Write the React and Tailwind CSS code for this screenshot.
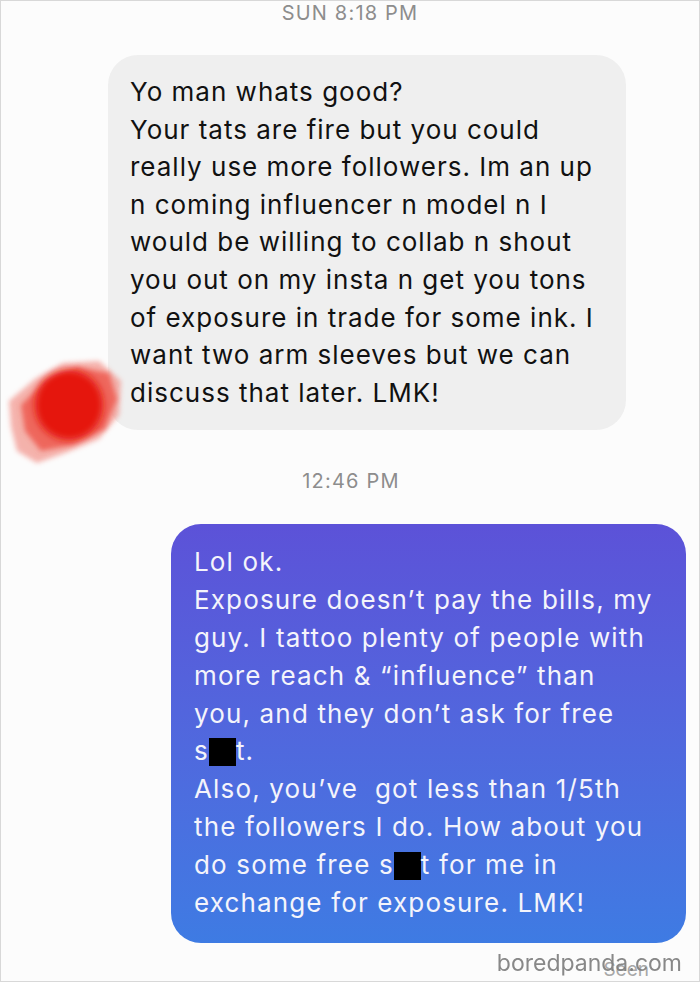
import React from "react";

const Redact = () => <span className="inline-block w-[27px] h-[28px] bg-black align-[-6px]" />;

const Blob = () => (
  <svg width="124" height="118" viewBox="0 0 124 118" className="absolute left-[4px] top-[350px]">
    <defs>
      <filter id="soft" x="-30%" y="-30%" width="160%" height="160%">
        <feGaussianBlur stdDeviation="2.5" />
      </filter>
      <filter id="soft2" x="-30%" y="-30%" width="160%" height="160%">
        <feGaussianBlur stdDeviation="3.5" />
      </filter>
    </defs>
    <path d="M4 50 L30 28 L58 12 L94 10 L116 30 L114 64 L94 88 L60 102 L32 112 L12 100 L6 76 Z" fill="#f2938a" opacity="0.7" filter="url(#soft)" />
    <path d="M16 54 L40 30 L72 16 L104 22 L112 48 L100 78 L68 94 L36 100 L20 80 Z" fill="#ee5a50" opacity="0.85" filter="url(#soft)" />
    <ellipse cx="64" cy="54" rx="34" ry="35" fill="#e5150d" filter="url(#soft2)" />
  </svg>
);

const incoming = [
  "Yo man whats good?",
  "Your tats are fire but you could",
  "really use more followers. Im an up",
  "n coming influencer n model n I",
  "would be willing to collab n shout",
  "you out on my insta n get you tons",
  "of exposure in trade for some ink. I",
  "want two arm sleeves but we can",
  "discuss that later. LMK!",
];

const App = () => {
  return (
    <div className="relative w-[700px] h-[982px] bg-[#fcfcfc] border border-[#d8d8d8] overflow-hidden font-['Inter','Liberation_Sans',Arial,sans-serif]">
      <p className="pt-[0px] text-center text-[20px] leading-[24px] tracking-[1.2px] text-[#8d8d8d]">SUN 8:18 PM</p>

      {/* Incoming */}
      <div className="mt-[30px] ml-[107px] w-[518px] rounded-[30px] bg-[#efefef] pl-[22px] pt-[18px] pb-[19px]">
        <div className="text-[26px] leading-[37.6px] text-[#111] tracking-[1px] whitespace-nowrap">
          {incoming.map((l) => (
            <p key={l}>{l}</p>
          ))}
        </div>
      </div>

      <Blob />

      <p className="mt-[39px] text-center text-[20px] leading-[24px] tracking-[1.2px] text-[#8d8d8d] pl-[2px]">12:46 PM</p>

      {/* Outgoing */}
      <div className="mt-[31px] ml-[170px] w-[515px] rounded-[30px] bg-gradient-to-b from-[#5c52d8] to-[#3e7be3] pl-[23px] pt-[19px] pb-[22px]">
        <div className="text-[26px] leading-[37.8px] text-[#f4f4fb] tracking-[1.15px] whitespace-nowrap">
          <p>Lol ok.</p>
          <p>Exposure doesn’t pay the bills, my</p>
          <p>guy. I tattoo plenty of people with</p>
          <p>more reach &amp; “influence” than</p>
          <p>you, and they don’t ask for free</p>
          <p>
            s<Redact />t.
          </p>
          <p>Also, you’ve&nbsp; got less than 1/5th</p>
          <p>the followers I do. How about you</p>
          <p>
            do some free s<Redact />t for me in
          </p>
          <p>exchange for exposure. LMK!</p>
        </div>
      </div>

      <div className="relative mt-[5px] h-[34px]">
        <span className="absolute right-[50px] top-[10px] text-[19px] leading-[24px] text-[#a8a8a8]">Seen</span>
        <span className="absolute right-[17px] top-[0px] text-[23px] leading-[30px] text-[#7c7c7c] opacity-90">boredpanda.com</span>
      </div>
    </div>
  );
};

export default App;
